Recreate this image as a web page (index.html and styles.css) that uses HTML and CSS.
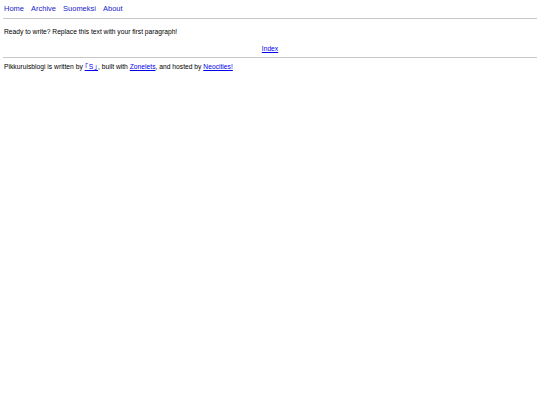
FILE: index.html
```html
<!DOCTYPE html>
<html lang="fi">
<head>
<meta charset="utf-8">
<title>Pikkuruisblogi</title>
<link rel="stylesheet" href="styles.css">
</head>
<body>
<nav class="nav">
<a href="#">Home</a>
<a href="#">Archive</a>
<a href="#">Suomeksi</a>
<a href="#">About</a>
</nav>
<hr class="rule">
<main class="content">
<p class="para">Ready to write? Replace this text with your first paragraph!</p>
<div class="index"><a href="#">Index</a></div>
</main>
<hr class="rule">
<footer class="footer">Pikkuruisblogi is written by <a class="sig" href="#">｢S｣</a>, built with <a href="#">Zonelets</a>, and hosted by <a href="#">Neocities!</a></footer>
</body>
</html>
```
FILE: styles.css
```css
html, body { margin: 0; padding: 0; background: #fff; }
body {
  padding: 4px 3px;
  font-family: "Liberation Sans", Arial, "Noto Sans CJK JP", sans-serif;
  font-size: 6.7px;
  color: #000;
}
a { color: #0000ee; }
.nav { display: flex; gap: 7px; font-size: 7.5px; padding-left: 1px; }
.nav a { text-decoration: none; color: #2222cc; }
.rule { border: 0; border-top: 1px solid #c8c8c8; margin: 5px 0; }
.content { padding: 0 1px; }
.para { margin: 9px 0 10px; }
.index { text-align: center; margin-bottom: 3px; }
.footer { padding: 1px 1px 0; font-size: 6.72px; line-height: 1; }
.sig { letter-spacing: 0.7px; }
```
